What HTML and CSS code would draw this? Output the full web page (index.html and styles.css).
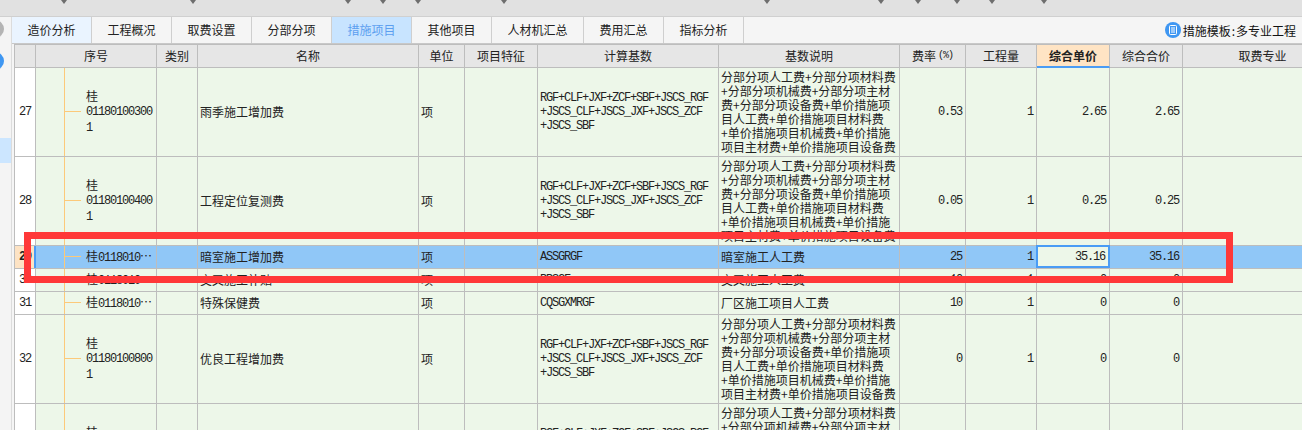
FILE: index.html
```html
<!DOCTYPE html>
<html lang="zh-CN">
<head>
    <meta charset="UTF-8">
    <title>措施项目</title>
    <link rel="stylesheet" href="styles.css">
</head>
<body>
    <div class="top-bar">
        <svg class="markers" width="1302" height="4" viewBox="0 0 1302 4">
            <path fill="#6e6e6e" d="M61 0h6l-3 4zM190 0h6l-3 4zM345 0h6l-3 4zM380 0h6l-3 4zM415 0h6l-3 4zM501 0h6l-3 4zM764 0h6l-3 4zM878 0h6l-3 4zM915 0h6l-3 4zM954 0h6l-3 4zM989 0h6l-3 4zM1041 0h6l-3 4z"/>
        </svg>
    </div>
    <div class="main">
        <div class="side">
            <div class="side-dot gray"></div>
            <div class="side-dot blue"></div>
            <div class="side-current"></div>
        </div>
        <div class="content">
            <div class="tabs">
                <div class="tab first">造价分析</div>
                <div class="tab">工程概况</div>
                <div class="tab">取费设置</div>
                <div class="tab">分部分项</div>
                <div class="tab active">措施项目</div>
                <div class="tab">其他项目</div>
                <div class="tab wide">人材机汇总</div>
                <div class="tab">费用汇总</div>
                <div class="tab">指标分析</div>
                <div class="template">
                    <svg width="16" height="16" viewBox="0 0 16 16">
                        <circle cx="8" cy="8" r="8" fill="#3f97f2"/>
                        <rect x="4.5" y="3.5" width="7" height="9" rx="1" fill="none" stroke="#fff"/>
                        <path d="M6 6h4M6 8h4M6 10h4" stroke="#fff"/>
                    </svg>
                    <span>措施模板<span class="colon">:</span>多专业工程</span>
                </div>
            </div>
            <div class="grid">
                <div class="row head">
                    <div class="cell"></div>
                    <div class="cell">序号</div>
                    <div class="cell">类别</div>
                    <div class="cell">名称</div>
                    <div class="cell">单位</div>
                    <div class="cell">项目特征</div>
                    <div class="cell">计算基数</div>
                    <div class="cell">基数说明</div>
                    <div class="cell">费率<span class="percent">(%)</span></div>
                    <div class="cell">工程量</div>
                    <div class="cell sorted">综合单价</div>
                    <div class="cell">综合合价</div>
                    <div class="cell">取费专业</div>
                </div>

                <div class="row tall">
                    <div class="cell no">27</div>
                    <div class="cell seq"><div class="tree"><i></i><span>桂<br><b>01180100300</b><br><b>1</b></span></div></div>
                    <div class="cell"></div>
                    <div class="cell text">雨季施工增加费</div>
                    <div class="cell text">项</div>
                    <div class="cell"></div>
                    <div class="cell code">RGF+CLF+JXF+ZCF+SBF+JSCS_RGF<br>+JSCS_CLF+JSCS_JXF+JSCS_ZCF<br>+JSCS_SBF</div>
                    <div class="cell text desc">分部分项人工费+分部分项材料费<br>+分部分项机械费+分部分项主材<br>费+分部分项设备费+单价措施项<br>目人工费+单价措施项目材料费<br>+单价措施项目机械费+单价措施<br>项目主材费+单价措施项目设备费</div>
                    <div class="cell num">0.53</div>
                    <div class="cell num">1</div>
                    <div class="cell num">2.65</div>
                    <div class="cell num">2.65</div>
                    <div class="cell"></div>
                </div>

                <div class="row tall">
                    <div class="cell no">28</div>
                    <div class="cell seq"><div class="tree"><i></i><span>桂<br><b>01180100400</b><br><b>1</b></span></div></div>
                    <div class="cell"></div>
                    <div class="cell text">工程定位复测费</div>
                    <div class="cell text">项</div>
                    <div class="cell"></div>
                    <div class="cell code">RGF+CLF+JXF+ZCF+SBF+JSCS_RGF<br>+JSCS_CLF+JSCS_JXF+JSCS_ZCF<br>+JSCS_SBF</div>
                    <div class="cell text desc">分部分项人工费+分部分项材料费<br>+分部分项机械费+分部分项主材<br>费+分部分项设备费+单价措施项<br>目人工费+单价措施项目材料费<br>+单价措施项目机械费+单价措施<br>项目主材费+单价措施项目设备费</div>
                    <div class="cell num">0.05</div>
                    <div class="cell num">1</div>
                    <div class="cell num">0.25</div>
                    <div class="cell num">0.25</div>
                    <div class="cell"></div>
                </div>

                <div class="row selected">
                    <div class="cell no">29</div>
                    <div class="cell seq"><div class="tree"><i></i><span>桂<b>0118010</b>…</span></div></div>
                    <div class="cell"></div>
                    <div class="cell text">暗室施工增加费</div>
                    <div class="cell text">项</div>
                    <div class="cell"></div>
                    <div class="cell code">ASSGRGF</div>
                    <div class="cell text">暗室施工人工费</div>
                    <div class="cell num">25</div>
                    <div class="cell num">1</div>
                    <div class="cell num current">35.16</div>
                    <div class="cell num">35.16</div>
                    <div class="cell"></div>
                </div>

                <div class="row">
                    <div class="cell no">30</div>
                    <div class="cell seq"><div class="tree"><i></i><span>桂<b>0118010</b>…</span></div></div>
                    <div class="cell"></div>
                    <div class="cell text">交叉施工补贴</div>
                    <div class="cell text">项</div>
                    <div class="cell"></div>
                    <div class="cell code">PPSGF</div>
                    <div class="cell text">交叉施工人工费</div>
                    <div class="cell num">10</div>
                    <div class="cell num">1</div>
                    <div class="cell num">0</div>
                    <div class="cell num">0</div>
                    <div class="cell"></div>
                </div>

                <div class="row">
                    <div class="cell no">31</div>
                    <div class="cell seq"><div class="tree"><i></i><span>桂<b>0118010</b>…</span></div></div>
                    <div class="cell"></div>
                    <div class="cell text">特殊保健费</div>
                    <div class="cell text">项</div>
                    <div class="cell"></div>
                    <div class="cell code">CQSGXMRGF</div>
                    <div class="cell text">厂区施工项目人工费</div>
                    <div class="cell num">10</div>
                    <div class="cell num">1</div>
                    <div class="cell num">0</div>
                    <div class="cell num">0</div>
                    <div class="cell"></div>
                </div>

                <div class="row tall">
                    <div class="cell no">32</div>
                    <div class="cell seq"><div class="tree"><i></i><span>桂<br><b>01180100800</b><br><b>1</b></span></div></div>
                    <div class="cell"></div>
                    <div class="cell text">优良工程增加费</div>
                    <div class="cell text">项</div>
                    <div class="cell"></div>
                    <div class="cell code">RGF+CLF+JXF+ZCF+SBF+JSCS_RGF<br>+JSCS_CLF+JSCS_JXF+JSCS_ZCF<br>+JSCS_SBF</div>
                    <div class="cell text desc">分部分项人工费+分部分项材料费<br>+分部分项机械费+分部分项主材<br>费+分部分项设备费+单价措施项<br>目人工费+单价措施项目材料费<br>+单价措施项目机械费+单价措施<br>项目主材费+单价措施项目设备费</div>
                    <div class="cell num">0</div>
                    <div class="cell num">1</div>
                    <div class="cell num">0</div>
                    <div class="cell num">0</div>
                    <div class="cell"></div>
                </div>

                <div class="row tall">
                    <div class="cell no"></div>
                    <div class="cell seq"><div class="tree"><i></i><span>桂<br><b>01180100900</b><br><b>1</b></span></div></div>
                    <div class="cell"></div>
                    <div class="cell"></div>
                    <div class="cell"></div>
                    <div class="cell"></div>
                    <div class="cell code">RGF+CLF+JXF+ZCF+SBF+JSCS_RGF<br>+JSCS_CLF+JSCS_JXF+JSCS_ZCF<br>+JSCS_SBF</div>
                    <div class="cell text desc">分部分项人工费+分部分项材料费<br>+分部分项机械费+分部分项主材<br>费+分部分项设备费+单价措施项<br>目人工费+单价措施项目材料费<br>+单价措施项目机械费+单价措施<br>项目主材费+单价措施项目设备费</div>
                    <div class="cell"></div>
                    <div class="cell"></div>
                    <div class="cell"></div>
                    <div class="cell"></div>
                    <div class="cell"></div>
                </div>
            </div>
        </div>
    </div>
    <div class="red-box"></div>
</body>
</html>
```

FILE: styles.css
```css
html, body {
    height: 430px;
    overflow: hidden;
}
body {
    margin: 0;
    position: relative;
    background-color: #f5f5f5;
    color: #222;
    font-family: "Noto Sans CJK SC", sans-serif;
    font-size: 12px;
}
.top-bar {
    height: 16px;
    background-color: #e1e1e1;
    border-bottom: 1px solid #d0d0d0;
}
.markers {
    display: block;
}
.main {
    display: flex;
}
.side {
    width: 11px;
    height: 413px;
    flex: none;
    overflow: hidden;
    border-right: 1px solid #dcdcdc;
    background-color: #f4f4f4;
}
.side-dot {
    width: 18px;
    height: 18px;
    margin: 3px 0 0 -14px;
    border-radius: 50%;
}
.side-dot.gray {
    background-color: #b4b4b4;
}
.side-dot.blue {
    margin-top: 14px;
    background-color: #3f97f2;
}
.side-current {
    height: 25px;
    margin-top: 68px;
    background-color: #cce6ff;
}
.content {
    width: 1290px;
    height: 413px;
    flex: none;
    overflow: hidden;
}

/* tabs */
.tabs {
    display: flex;
    height: 26px;
    border-bottom: 1px solid #c8c8c8;
    background-color: #f5f5f5;
}
.tab {
    box-sizing: border-box;
    width: 80px;
    border-right: 1px solid #cfcfcf;
    line-height: 25px;
    text-align: center;
}
.tab.first {
    background-color: #eaf4ff;
}
.tab.wide {
    width: 92px;
}
.tab.active {
    background-color: #c8e4ff;
    color: #5c9ff0;
}
.template {
    display: flex;
    align-items: center;
    gap: 2px;
    margin-left: auto;
    padding-right: 6px;
    color: #111;
}
.colon {
    margin: 0 1px;
}

/* table */
.grid {
    margin: 0 0 0 2px;
    border-top: 1px solid #bdbdbd;
    border-left: 1px solid #bdbdbd;
}
.row {
    display: grid;
    grid-template-columns: 21px 121px 41px 221px 46px 73px 181px 181px 66px 71px 73px 73px 160px;
    height: 22px;
    border-bottom: 1px solid #bdbdbd;
    background-color: #edf7e9;
}
.row.tall {
    height: 88px;
}
.cell {
    box-sizing: border-box;
    display: flex;
    align-items: center;
    min-width: 0;
    overflow: hidden;
    border-right: 1px solid #bdbdbd;
    line-height: 14px;
    white-space: nowrap;
}
.head {
    background-color: #e6e6e6;
}
.head .cell {
    justify-content: center;
}
.percent {
    margin-left: 2px;
    font-family: "Liberation Mono", monospace;
    font-size: 10px;
    letter-spacing: -1px;
}
.head .sorted {
    margin-bottom: -1px;
    background-color: #ffe4c4;
    border-bottom: 2px solid #4a9cf5;
    font-weight: 700;
}
.no {
    padding-left: 4px;
    background-color: #fff;
}
.no, .num, .code, .seq b {
    font-family: "Liberation Mono", monospace;
    font-size: 12px;
    font-weight: 400;
    letter-spacing: -1.2px;
}
.text, .code {
    padding-left: 2px;
}
.num {
    justify-content: flex-end;
    padding-right: 3px;
}
.seq {
    padding-left: 28px;
    align-items: stretch;
}
.tree {
    display: flex;
    align-items: center;
    border-left: 1px solid #fcc97a;
}
.tree i {
    width: 16px;
    height: 1px;
    margin-top: -1px;
    margin-right: 5px;
    background-color: #fcc97a;
}
.selected {
    background-color: #90c7f7;
}
.selected .no {
    border-right: 2px solid #4a9cf5;
    background-color: #fde3c4;
    font-weight: 700;
}
.selected .current {
    margin: -1px 0 0 -1px;
    border: 2px solid #4a9cf5;
    background-color: #edf7e9;
}

/* annotation drawn on top of the screenshot */
.red-box {
    position: absolute;
    left: 24px;
    top: 232px;
    width: 1195px;
    height: 37px;
    border: 7px solid #ff3838;
}
```
